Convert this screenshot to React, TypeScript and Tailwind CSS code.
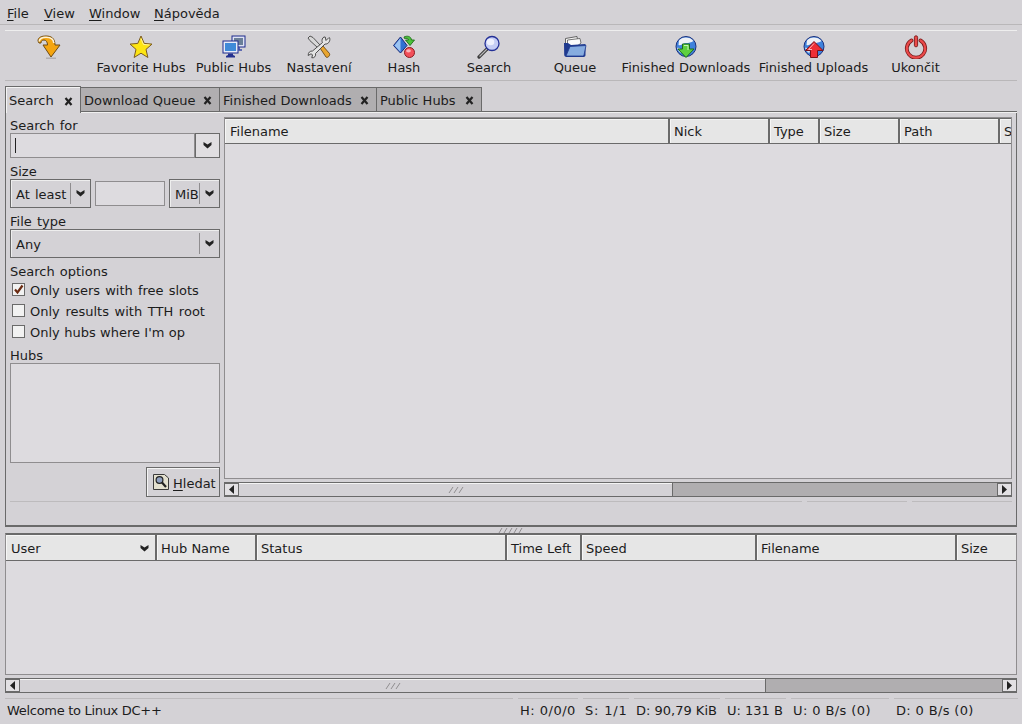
import React from "react";

const Chevron = () => (
  <svg width="9" height="7" viewBox="0 0 9 7" className="shrink-0">
    <path d="M0.5 0 L4.5 2.5 L8.5 0 L8.5 3 L4.5 6.5 L0.5 3 Z" fill="#222" />
  </svg>
);

const CloseMark = () => (
  <svg width="9" height="9" viewBox="0 0 9 9" className="shrink-0">
    <path d="M1.5 1 L7.5 8 M7.5 1 L1.5 8" stroke="#222" strokeWidth="2.2" />
  </svg>
);

const ConnectIcon = () => (
  <svg width="24" height="24" viewBox="0 0 24 24">
    <path d="M1 6 C1 2 5 1 9 1 C14 1 18 3 18 10 L23 10 L14 22 L6 10 L10.5 10 C10.5 7 9 5 7 5 C5 5 4 6 4 8 L2 8 Z" fill="#f5a50f" stroke="#6e4a12" strokeWidth="1" strokeLinejoin="round" />
    <path d="M2.2 6.5 C2.5 3.2 5.5 2.2 9 2.2 C13 2.2 16.6 3.6 16.8 8" fill="none" stroke="#fdf3d8" strokeWidth="1.6" />
    <path d="M9 23.2 L19 23.2" stroke="#a9a7a9" strokeWidth="1.2" />
  </svg>
);

const StarIcon = () => (
  <svg width="24" height="24" viewBox="0 0 24 24">
    <path d="M12 1 L15.2 8.4 L23 9.1 L17 14.4 L18.9 22.5 L12 18.2 L5.1 22.5 L7 14.4 L1 9.1 L8.8 8.4 Z" fill="#fde513" stroke="#7b5a22" strokeWidth="1" strokeLinejoin="round" />
    <path d="M12 3.5 L14.4 9.4 L20.5 10" fill="none" stroke="#fff7c4" strokeWidth="0.8" />
  </svg>
);

const HubsIcon = () => (
  <svg width="24" height="24" viewBox="0 0 24 24">
    <rect x="10" y="1" width="13" height="11" fill="#dfe3f4" stroke="#1c2a8c" strokeWidth="1" />
    <rect x="12" y="3" width="9" height="7" fill="#6a7f98" />
    <rect x="1" y="6" width="15" height="12" fill="#e8ebf8" stroke="#1c2a8c" strokeWidth="1" />
    <rect x="3" y="8" width="11" height="8" fill="#3f8ad8" />
    <path d="M6 18.5 L11 18.5 L11 20 L13 21 L13 22.5 L4 22.5 L4 21 L6 20 Z" fill="#23308f" />
    <path d="M17 12 L17 15 L20 15" fill="none" stroke="#3a4aa5" strokeWidth="1.6" />
  </svg>
);

const ToolsIcon = () => (
  <svg width="24" height="24" viewBox="0 0 24 24">
    <path d="M1 3 L3 1 L6 2.5 L13 10 L10.5 12.5 L2.8 5.5 Z" fill="#d8d8d8" stroke="#444" strokeWidth="0.9" />
    <path d="M13 13 L15.5 10.5 L22.5 18.5 C23.5 20.5 20.5 23.5 19 22 Z" fill="#e9a52e" stroke="#6b4a15" strokeWidth="0.9" />
    <path d="M22 2.5 L19 5.5 L18.2 2 C16.5 1.5 15 3.5 15 5.5 C15 6.5 15.2 7 15.5 7.5 L5.5 16 C3 15.8 1 17.5 1.2 20.5 L4 18.8 L5.5 19.8 L4.8 22.8 C7.5 23.2 9.2 20.8 8.5 18.5 L18 9 C20.5 9.5 23.4 7 22.8 3.2 Z" fill="#e4e4e4" stroke="#3d3d3d" strokeWidth="0.9" strokeLinejoin="round" />
  </svg>
);

const HashIcon = () => (
  <svg width="24" height="24" viewBox="0 0 24 24">
    <path d="M8.5 2 L15 10.5 L8.5 18 L1.5 10.5 Z" fill="#2f71d2" stroke="#1c2a78" strokeWidth="1" />
    <path d="M8.5 3 L8.5 17 L2.5 10.5 Z" fill="#9cc4f2" />
    <path d="M12 2 C15 0.5 19 1 19.5 5 L22.5 5 L18 10.5 L13.5 5 L16.5 5 C16.5 3.5 14.5 3 12.5 3.5 Z" fill="#4ac23a" stroke="#1f6e1a" strokeWidth="0.9" />
    <circle cx="17.5" cy="17.5" r="5" fill="#f2505a" stroke="#8c1a20" strokeWidth="1" />
    <ellipse cx="16.5" cy="15.8" rx="2.4" ry="1.6" fill="#fbb7bb" />
  </svg>
);

const SearchIcon = () => (
  <svg width="24" height="24" viewBox="0 0 24 24">
    <path d="M10 14 L2 22" stroke="#3b3b3b" strokeWidth="3.2" strokeLinecap="round" />
    <path d="M10 14 L2.5 21.5" stroke="#b9b9b9" strokeWidth="1.1" />
    <circle cx="15" cy="8.5" r="7" fill="#c5cdf5" stroke="#232f96" strokeWidth="1.3" />
    <ellipse cx="13.5" cy="7" rx="3.8" ry="3.2" fill="#eef0fd" />
  </svg>
);

const FolderIcon = () => (
  <svg width="24" height="24" viewBox="0 0 24 24">
    <path d="M2.5 17 L2.5 3.5 L14 1.5 L15 8 L4 18 Z" fill="#f5f5f5" stroke="#444" strokeWidth="0.8" />
    <path d="M4.5 17 L4.5 5 L17 3.5 L18 8 L6 18 Z" fill="#fbfbfb" stroke="#555" strokeWidth="0.8" />
    <path d="M1 8 L5 8 L8 10 L22.5 9 L22.5 20 C22.5 21.5 21.5 22 20 22 L3.5 22 C2 22 1.2 21 1.2 19.5 Z" fill="#1f3a8f" />
    <path d="M3 21 L7 11.5 L23 10.5 L21 20 C20.8 20.8 20 21 19.5 21 Z" fill="#86acdf" stroke="#1f3a8f" strokeWidth="0.8" />
  </svg>
);

const Globe = () => (
  <>
    <circle cx="12" cy="11.5" r="10" fill="#3f82dc" stroke="#1a2f7c" strokeWidth="1" />
    <path d="M5 5.5 C8 1.5 16 1.5 19.5 6 C17 7.5 15 8 12 8 C9 8 8 11 4.5 10 Z" fill="#eef1f6" />
    <path d="M3 13 C5 12 7 14 8 17 C7 19 5 17 3 13 Z" fill="#dde3ee" />
  </>
);

const DownloadIcon = () => (
  <svg width="24" height="24" viewBox="0 0 24 24">
    <Globe />
    <path d="M8.5 9 L15.5 9 L15.5 14 L20 14 L12 22.5 L4 14 L8.5 14 Z" fill="#5fd03e" stroke="#1f6e1a" strokeWidth="1" strokeLinejoin="round" />
    <path d="M10 10.5 L14 10.5 L14 15" fill="none" stroke="#c6f5b6" strokeWidth="1" />
  </svg>
);

const UploadIcon = () => (
  <svg width="24" height="24" viewBox="0 0 24 24">
    <Globe />
    <path d="M8.5 22.5 L15.5 22.5 L15.5 15.5 L21 15.5 L12 6.5 L3.5 15.5 L8.5 15.5 Z" fill="#ef2f36" stroke="#7c1116" strokeWidth="1" strokeLinejoin="round" />
    <path d="M12 8.5 L6.5 14.5 L10 14.5" fill="none" stroke="#fbb5b8" strokeWidth="1" />
  </svg>
);

const QuitIcon = () => (
  <svg width="24" height="24" viewBox="0 0 24 24">
    <path d="M7.5 5.5 A9.2 9.2 0 1 0 16.5 5.5" fill="none" stroke="#7a1a1a" strokeWidth="3.8" strokeLinecap="round" />
    <path d="M7.5 5.5 A9.2 9.2 0 1 0 16.5 5.5" fill="none" stroke="#ea4a4a" strokeWidth="2.2" strokeLinecap="round" />
    <rect x="10.4" y="0.8" width="3.2" height="11" rx="1.5" fill="#ea4a4a" stroke="#7a1a1a" strokeWidth="0.9" />
  </svg>
);

const SearchFileIcon = () => (
  <svg width="18" height="18" viewBox="0 0 18 18">
    <path d="M1.5 1.5 L12.5 1.5 L16.5 5 L16.5 16.5 L1.5 16.5 Z" fill="#e3e0cf" stroke="#3a3a3a" strokeWidth="1" />
    <circle cx="7.5" cy="7" r="3.4" fill="#8fa0c0" stroke="#222" strokeWidth="1.2" />
    <path d="M10 9.5 L14 14" stroke="#222" strokeWidth="2.2" />
  </svg>
);

const Grip = () => (
  <svg width="16" height="6" viewBox="0 0 16 6">
    <path d="M1 6 L5 0 M6 6 L10 0 M11 6 L15 0" stroke="#8f8d8f" strokeWidth="1" />
  </svg>
);

const WideGrip = () => (
  <svg width="26" height="5" viewBox="0 0 26 5">
    <path d="M1 5 L4 0 M6 5 L9 0 M11 5 L14 0 M16 5 L19 0 M21 5 L24 0" stroke="#8f8d8f" strokeWidth="1" />
  </svg>
);

const toolbarItems = [
  { label: "", width: "w-[84px]", icon: <ConnectIcon /> },
  { label: "Favorite Hubs", width: "w-[100px]", icon: <StarIcon /> },
  { label: "Public Hubs", width: "w-[85px]", icon: <HubsIcon /> },
  { label: "Nastavení", width: "w-[86px]", icon: <ToolsIcon /> },
  { label: "Hash", width: "w-[84px]", icon: <HashIcon /> },
  { label: "Search", width: "w-[86px]", icon: <SearchIcon /> },
  { label: "Queue", width: "w-[86px]", icon: <FolderIcon /> },
  { label: "Finished Downloads", width: "w-[136px]", icon: <DownloadIcon /> },
  { label: "Finished Uploads", width: "w-[119px]", icon: <UploadIcon /> },
  { label: "Ukončit", width: "w-[85px]", icon: <QuitIcon /> },
];

const MenuItem = ({ mnemonic, rest, width = "" }: { mnemonic: string; rest: string; width?: string }) => (
  <span className={width}>
    <span className="underline underline-offset-2">{mnemonic}</span>
    {rest}
  </span>
);

const Tab = ({ label, width, active = false }: { label: string; width: string; active?: boolean }) =>
  active ? (
    <div className={`${width} h-[27px] pt-[2px] flex items-center justify-between pl-[3px] pr-[7px] bg-[#d4d2d6] border-t border-x border-[#6a6a6a] shadow-[inset_1px_1px_0_#f4f4f4]`}>
      <span>{label}</span>
      <CloseMark />
    </div>
  ) : (
    <div className={`${width} h-[27px] pt-px border-b border-b-[#f0f0f0]`}>
      <div className="h-full pt-[2px] pl-[3px] pr-[7px] flex items-center justify-between bg-[#b0aeb0] border-t border-r border-b border-[#6a6a6a]">
        <span>{label}</span>
        <CloseMark />
      </div>
    </div>
  );

const Combo = ({ label, width }: { label: string; width: string }) => (
  <div className={`${width} h-[29px] flex items-center bg-[#d4d2d6] border border-[#6a6a6a] shadow-[inset_1px_1px_0_#eeeeee] pl-[5px] pr-[5px]`}>
    <span className="flex-1 pt-[3px] [word-spacing:1px]">{label}</span>
    <span className="w-px h-[21px] bg-[#8f8d8f] mr-[5px]" />
    <Chevron />
  </div>
);

const Check = ({ label, spacing, checked = false }: { label: string; spacing: string; checked?: boolean }) => (
  <div className="h-[21px] flex items-center gap-[5px] pl-[2px]">
    <span className="w-[13px] h-[13px] bg-[#f2f2f2] border border-[#6a6a6a] flex items-center justify-center">
      {checked && (
        <svg width="11" height="11" viewBox="0 0 11 11">
          <path d="M2 5.5 L4.5 8.5 L9.5 1.5" fill="none" stroke="#6b2a12" strokeWidth="2.2" />
        </svg>
      )}
    </span>
    <span className={`pt-[2px] ${spacing}`}>{label}</span>
  </div>
);

const Column = ({ label, width, arrow = false, first = false }: { label: string; width: string; arrow?: boolean; first?: boolean }) => (
  <div className={`${width} ${first ? "pl-[5px]" : "pl-[4px]"} shrink-0 h-full flex items-center justify-between pt-[2px] pr-[6px] overflow-hidden bg-[#e6e6e6] border-r-2 border-r-[#6a6a6a] shadow-[inset_1px_1px_0_#f6f6f6]`}>
    <span>{label}</span>
    {arrow && <Chevron />}
  </div>
);

const ScrollArrow = ({ right = false }: { right?: boolean }) => (
  <div className="w-[15px] h-full shrink-0 flex items-center justify-center bg-[#e2e0e3] border border-[#6a6a6a]">
    <svg width="7" height="9" viewBox="0 0 7 9">
      <path d={right ? "M1 0 L6 4.5 L1 9 Z" : "M6 0 L1 4.5 L6 9 Z"} fill="#222" />
    </svg>
  </div>
);

const Scrollbar = ({ thumb }: { thumb: string }) => (
  <div className="h-[15px] flex bg-[#b0aeb0] border-y border-[#6a6a6a]">
    <ScrollArrow />
    <div className={`${thumb} h-full flex items-center justify-center bg-[#d4d2d6] border-r border-[#6a6a6a] shadow-[inset_0_1px_0_#f4f4f4]`}>
      <Grip />
    </div>
    <div className="flex-1" />
    <ScrollArrow right />
  </div>
);

const StatusLine = ({ width, label, spacing = "" }: { width: string; label?: string; spacing?: string }) => (
  <div className={`${width} ${spacing} shrink-0 h-full border-t border-t-[#bdbbbd] pl-[2px] pt-[4px] whitespace-nowrap`}>
    {label}
  </div>
);

const FieldLabel = ({ label, height = "h-[21px]" }: { label: string; height?: string }) => (
  <div className={`${height} shrink-0 flex items-end leading-[14px] [word-spacing:1px]`}>{label}</div>
);

export default function App() {
  return (
    <div className="w-[1022px] h-[724px] overflow-hidden flex flex-col bg-[#d4d2d6] text-[13px] leading-[16px] text-[#1c1c1c] font-['DejaVu_Sans',sans-serif]">
      <div className="h-[25px] shrink-0 flex items-center pt-[3px] pl-[7px] border-b border-b-[#b9b7b9]">
        <MenuItem mnemonic="F" rest="ile" width="w-[37px]" />
        <MenuItem mnemonic="V" rest="iew" width="w-[45px]" />
        <MenuItem mnemonic="W" rest="indow" width="w-[65px]" />
        <MenuItem mnemonic="N" rest="ápověda" />
      </div>

      <div className="mx-[5px] mt-[5px] h-[51px] shrink-0 flex pl-[2px] border-t border-t-[#eeeeee] border-b border-b-[#b9b7b9]">
        {toolbarItems.map((item, index) => (
          <div key={index} className={`${item.width} shrink-0 flex flex-col items-center pt-[4px]`}>
            {item.icon}
            <span className="mt-px whitespace-nowrap">{item.label}</span>
          </div>
        ))}
      </div>

      <div className="mx-[5px] mt-[5px] h-[27px] shrink-0 flex">
        <Tab label="Search" width="w-[76px]" active />
        <Tab label="Download Queue" width="w-[139px]" />
        <Tab label="Finished Downloads" width="w-[157px]" />
        <Tab label="Public Hubs" width="w-[105px]" />
        <div className="flex-1 pt-px border-b border-b-[#f0f0f0]">
          <div className="h-full border-b border-b-[#6a6a6a]" />
        </div>
      </div>

      <div className="mx-[5px] h-[414px] shrink-0 flex flex-col border-x border-b-2 border-[#6a6a6a] px-[4px]">
        <div className="h-[388px] flex gap-[4px]">
          <div className="w-[210px] shrink-0 flex flex-col">
            <FieldLabel label="Search for" height="h-[20px]" />
            <div className="h-[25px] flex">
              <div className="flex-1 flex items-center pl-[4px] bg-[#dddbdf] border border-[#8f8d8f]">
                <span className="w-px h-[15px] bg-[#222]" />
              </div>
              <div className="w-[25px] flex items-center justify-center bg-[#e0dee1] border border-[#6a6a6a]">
                <Chevron />
              </div>
            </div>
            <FieldLabel label="Size" />
            <div className="h-[29px] flex items-center gap-[4px]">
              <Combo label="At least" width="w-[81px]" />
              <div className="w-[70px] h-[25px] bg-[#dddbdf] border border-[#8f8d8f]" />
              <Combo label="MiB" width="w-[51px]" />
            </div>
            <FieldLabel label="File type" />
            <Combo label="Any" width="w-full" />
            <FieldLabel label="Search options" />
            <Check label="Only users with free slots" spacing="[word-spacing:1px]" checked />
            <Check label="Only results with TTH root" spacing="[word-spacing:1.5px]" />
            <Check label="Only hubs where I'm op" spacing="[word-spacing:0.25px]" />
            <FieldLabel label="Hubs" />
            <div className="h-[100px] shrink-0 bg-[#dddbdf] border border-[#8f8d8f]" />
            <div className="mt-[4px] flex justify-end">
              <div className="w-[74px] h-[30px] flex items-center gap-[3px] pl-[5px] border border-[#6a6a6a] shadow-[inset_1px_1px_0_#f4f4f4]">
                <SearchFileIcon />
                <span className="pt-[3px]">
                  <MenuItem mnemonic="H" rest="ledat" />
                </span>
              </div>
            </div>
          </div>

          <div className="flex-1 min-w-0 flex flex-col pt-[4px]">
            <div className="h-[362px] flex flex-col bg-[#dddbdf] border border-[#8f8d8f] overflow-hidden">
              <div className="h-[26px] shrink-0 flex border-y border-[#6a6a6a]">
                <Column label="Filename" width="w-[445px]" first />
                <Column label="Nick" width="w-[100px]" />
                <Column label="Type" width="w-[50px]" />
                <Column label="Size" width="w-[80px]" />
                <Column label="Path" width="w-[100px]" />
                <Column label="S" width="w-[20px]" />
              </div>
            </div>
            <div className="mt-[3px]">
              <Scrollbar thumb="w-[434px]" />
            </div>
          </div>
        </div>

        <div className="h-[24px] flex gap-[5px]">
          <StatusLine width="w-[792px]" />
          <StatusLine width="w-[100px]" />
          <StatusLine width="w-[100px]" />
        </div>
      </div>

      <div className="h-[6px] shrink-0 flex items-center justify-center">
        <WideGrip />
      </div>

      <div className="mx-[5px] h-[142px] shrink-0 bg-[#dddbdf] border border-[#8f8d8f] border-t-[#6a6a6a] overflow-hidden">
        <div className="h-[27px] flex border-y border-[#6a6a6a]">
          <Column label="User" width="w-[151px]" arrow first />
          <Column label="Hub Name" width="w-[100px]" />
          <Column label="Status" width="w-[250px]" />
          <Column label="Time Left" width="w-[75px]" />
          <Column label="Speed" width="w-[175px]" />
          <Column label="Filename" width="w-[200px]" />
          <Column label="Size" width="w-[70px]" />
        </div>
      </div>

      <div className="mx-[5px] mt-[3px]">
        <Scrollbar thumb="w-[746px]" />
      </div>

      <div className="mx-[5px] mt-[5px] flex-1 flex gap-[5px]">
        <StatusLine width="w-[508px]" label="Welcome to Linux DC++" spacing="tracking-[-0.3px]" />
        <StatusLine width="w-[60px]" label="H: 0/0/0" spacing="tracking-[0.5px]" />
        <StatusLine width="w-[46px]" label="S: 1/1" spacing="tracking-[0.8px]" />
        <StatusLine width="w-[86px]" label="D: 90,79 KiB" />
        <StatusLine width="w-[61px]" label="U: 131 B" />
        <StatusLine width="w-[98px]" label="U: 0 B/s (0)" spacing="tracking-[0.4px]" />
        <StatusLine width="w-[124px]" label="D: 0 B/s (0)" spacing="tracking-[0.35px]" />
      </div>
    </div>
  );
}
